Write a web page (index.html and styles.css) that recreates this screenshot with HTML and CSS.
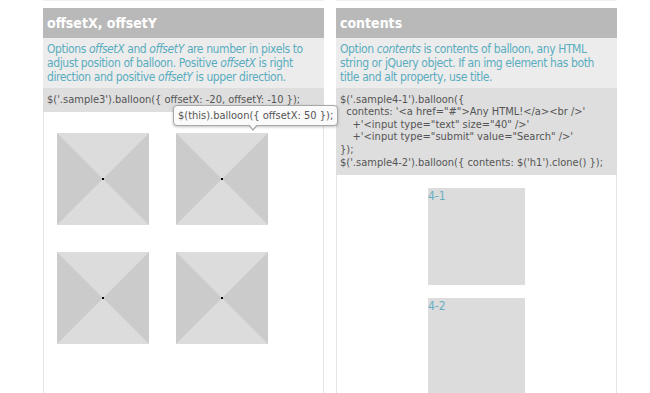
FILE: index.html
```html
<!DOCTYPE html>
<html lang="en">
<head>
    <meta charset="UTF-8">
    <title>balloon samples</title>
    <link rel="stylesheet" href="styles.css">
</head>
<body>
    <div class="page">
        <div class="column">
            <div class="prev-edge"></div>
            <h2 class="title">offsetX, offsetY</h2>
            <p class="desc">Options <em>offsetX</em> and <em>offsetY</em> are number in pixels to adjust position of balloon. Positive <em>offsetX</em> is right direction and positive <em>offsetY</em> is upper direction.</p>
            <pre class="code">$('.sample3').balloon({ offsetX: -20, offsetY: -10 });</pre>
            <div class="sample sample3">
                <div class="thumbs">
                    <svg class="thumb" viewBox="0 0 92 92"><rect width="92" height="92" fill="#dcdcdc"/><polygon points="0,0 46,46 0,92" fill="#cbcbcb"/><polygon points="92,0 46,46 92,92" fill="#cbcbcb"/><rect x="45" y="45" width="2" height="2" fill="#000"/></svg>
                    <svg class="thumb" viewBox="0 0 92 92"><rect width="92" height="92" fill="#dcdcdc"/><polygon points="0,0 46,46 0,92" fill="#cbcbcb"/><polygon points="92,0 46,46 92,92" fill="#cbcbcb"/><rect x="45" y="45" width="2" height="2" fill="#000"/></svg>
                    <svg class="thumb" viewBox="0 0 92 92"><rect width="92" height="92" fill="#dcdcdc"/><polygon points="0,0 46,46 0,92" fill="#cbcbcb"/><polygon points="92,0 46,46 92,92" fill="#cbcbcb"/><rect x="45" y="45" width="2" height="2" fill="#000"/></svg>
                    <svg class="thumb" viewBox="0 0 92 92"><rect width="92" height="92" fill="#dcdcdc"/><polygon points="0,0 46,46 0,92" fill="#cbcbcb"/><polygon points="92,0 46,46 92,92" fill="#cbcbcb"/><rect x="45" y="45" width="2" height="2" fill="#000"/></svg>
                </div>
                <div class="balloon">$(this).balloon({ offsetX: 50 });</div>
            </div>
        </div>
        <div class="column">
            <div class="prev-edge"></div>
            <h2 class="title">contents</h2>
            <p class="desc">Option <em>contents</em> is contents of balloon, any HTML string or jQuery object. If an img element has both title and alt property, use title.</p>
            <pre class="code">$('.sample4-1').balloon({
  contents: '&lt;a href="#"&gt;Any HTML!&lt;/a&gt;&lt;br /&gt;'
    +'&lt;input type="text" size="40" /&gt;'
    +'&lt;input type="submit" value="Search" /&gt;'
});
$('.sample4-2').balloon({ contents: $('h1').clone() });</pre>
            <div class="sample sample4">
                <div class="box">4-1</div>
                <div class="box">4-2</div>
            </div>
        </div>
    </div>
</body>
</html>
```

FILE: styles.css
```css
body {
    margin: 0;
    background-color: #fff;
    font-family: "DejaVu Sans Condensed", "DejaVu Sans", sans-serif;
    font-stretch: condensed;
}
.page {
    display: flex;
    gap: 12px;
    padding-left: 43px;
}
.column {
    width: 281px;
}
.prev-edge {
    height: 1px;
    background-color: #f0f0f0;
    margin-bottom: 7px;
}
.title {
    margin: 0;
    height: 30px;
    line-height: 30px;
    padding: 0 4px;
    background-color: #b9b9b9;
    color: #fff;
    font-size: 14px;
    font-weight: bold;
}
.desc {
    margin: 0;
    padding: 4px 3px 3px 4px;
    background-color: #ececec;
    color: #5aacbf;
    font-size: 12px;
    letter-spacing: -0.4px;
    line-height: 14.2px;
}
.code {
    margin: 0;
    padding: 6px 4px;
    background-color: #dedede;
    color: #555;
    font-family: inherit;
    font-size: 11px;
    line-height: 12.6px;
    white-space: pre;
}
.sample {
    position: relative;
    height: 290px;
    border-left: 1px solid #e3e3e3;
    border-right: 1px solid #e3e3e3;
}
.thumbs {
    display: grid;
    grid-template-columns: 92px 92px;
    gap: 27px;
    padding: 21px 0 0 13px;
}
.thumb {
    display: block;
    width: 92px;
    height: 92px;
}
.balloon {
    position: absolute;
    left: 129px;
    top: -7px;
    padding: 3px 4px;
    background-color: #fafafa;
    border: 1px solid #a8a8a8;
    border-radius: 4px;
    box-shadow: 0 1px 3px rgba(0, 0, 0, 0.25);
    color: #555;
    font-size: 11px;
    line-height: 13px;
    white-space: nowrap;
}
.balloon::after {
    content: "";
    position: absolute;
    left: 74px;
    bottom: -6px;
    border-left: 5px solid transparent;
    border-right: 5px solid transparent;
    border-top: 6px solid #a8a8a8;
}
.balloon::before {
    content: "";
    position: absolute;
    left: 75px;
    bottom: -4px;
    border-left: 4px solid transparent;
    border-right: 4px solid transparent;
    border-top: 5px solid #fafafa;
    z-index: 1;
}
.sample4 {
    display: flex;
    flex-direction: column;
    align-items: center;
    gap: 13px;
    padding-top: 13px;
}
.box {
    width: 97px;
    height: 97px;
    flex-shrink: 0;
    background-color: #dcdcdc;
    color: #68aec2;
    font-size: 12px;
    line-height: 16px;
}
```
